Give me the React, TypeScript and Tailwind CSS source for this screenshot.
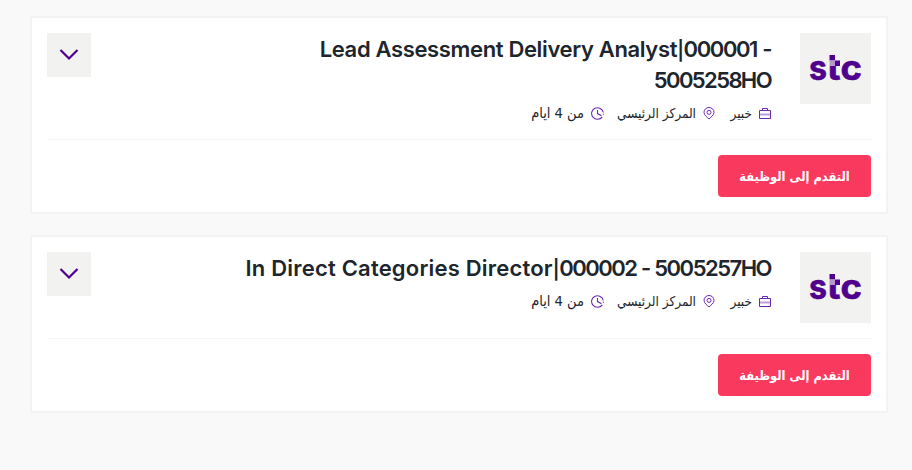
import React from "react";

// ---------- Types ----------
interface Job {
    id: string;
    // each title line is a list of runs with their own tracking
    lines: Array<Array<{ text: string; className: string }>>;
    headerClass: string;
}

// ---------- Data ----------
const JOBS: Job[] = [
    {
        id: "000001",
        lines: [
            [
                { text: "Lead Assessment Delivery Analyst", className: "tracking-[-0.35px]" },
                { text: "|", className: "text-[19px] tracking-[-0.4px]" },
                { text: "000001 -", className: "tracking-[-1.4px] [word-spacing:1px]" },
            ],
            [{ text: "5005258HO", className: "tracking-[-1.6px]" }],
        ],
        headerClass: "h-[107px]",
    },
    {
        id: "000002",
        lines: [
            [
                { text: "In Direct Categories Director", className: "tracking-[0.2px]" },
                { text: "|", className: "text-[19px] tracking-[-0.4px]" },
                { text: "000002 - 5005257HO", className: "tracking-[-1.5px] [word-spacing:0.5px]" },
            ],
        ],
        headerClass: "h-[87px]",
    },
];

// ---------- Icons ----------
function StcLogo() {
    return (
        <svg width="71" height="71" viewBox="0 0 71 71" direction="ltr" aria-label="stc">
            <g fill="#4f008c" stroke="#4f008c" strokeWidth="0.6" fontFamily="Inter" fontWeight="700" fontSize="35">
                <text x="9" y="47.2" textLength="18" lengthAdjust="spacingAndGlyphs">s</text>
                <text x="27" y="47.2" textLength="13.5" lengthAdjust="spacingAndGlyphs">t</text>
                <text x="40.5" y="47.2" textLength="21.5" lengthAdjust="spacingAndGlyphs">c</text>
            </g>
            <path d="M26.500 19h14.500v14H26.500z" fill="#f2f2f1" />
            <path d="M29.5 22h5.5v5.5h-5.5zM35 27.5h5V33h-5z" fill="#4f008c" />
            <path d="M29.5 27.5H35V33h-5.5z" fill="#b897ce" />
        </svg>
    );
}

function BriefcaseIcon() {
    return (
        <svg width="12" height="13" viewBox="0 0 12 13" fill="none" stroke="#6d28b0">
            <path d="M.5 3.500h11v8H.5zM3.500 3.500v-2h5v2" />
            <path d="M1 7.500h10" strokeWidth="2" strokeOpacity=".45" />
        </svg>
    );
}

function PinIcon() {
    return (
        <svg width="12" height="13" viewBox="0 0 12 13" fill="none" stroke="#6d28b0">
            <path d="M6 12C4.3 10.4 1 8.2 1 5.3a5 4.8 0 0 1 10 0C11 8.2 7.700 10.400 6 12z" />
            <circle cx="6" cy="5.400" r="2" />
        </svg>
    );
}

function ClockIcon() {
    return (
        <svg width="13" height="13" viewBox="0 0 13 13" fill="none" stroke="#6d28b0" strokeWidth="1.1">
            <path d="M12.300 5.500A5.900 5.700 0 1 0 11.300 9.800M6.500 3v3.600l4 2.200M12.400 6.800v1" />
        </svg>
    );
}

// ---------- Components ----------
function JobMeta() {
    return (
        <div className="mr-px flex h-5 items-center font-['DejaVu_Sans_Condensed','DejaVu_Sans',sans-serif] text-[13.5px] whitespace-nowrap text-[#1d252d]">
            <BriefcaseIcon />
            <span className="mr-[7px] w-[23px] pt-px">خبير</span>
            <span className="mr-[14px]"><PinIcon /></span>
            <span className="mr-[7px] w-[80px] pt-px">المركز الرئيسي</span>
            <span className="mr-[12px]"><ClockIcon /></span>
            <span className="mr-[7px] w-[54px] pt-px text-[14.5px]">من 4 ايام</span>
        </div>
    );
}

function JobCard({ job }: { job: Job }) {
    return (
        <article className="border-2 border-[#f3f3f3] bg-white p-[15px]">
            <div className={`flex items-start border-b border-[#f4f4f4] ${job.headerClass}`}>
                <div className="size-[71px] shrink-0 bg-[#f2f2f1]">
                    <StcLogo />
                </div>
                <div className="mr-7 flex-1 pt-px">
                    <h2
                        dir="ltr"
                        className="pr-[1px] text-right font-['Inter',sans-serif] text-[22px] leading-[31px] font-[560] whitespace-nowrap text-[#1d252d]"
                    >
                        {job.lines.map((line, i) => (
                            <span key={i} className="block h-[31px]">
                                {line.map((run) => (
                                    <span key={run.text} className={run.className}>{run.text}</span>
                                ))}
                            </span>
                        ))}
                    </h2>
                    <div className="mt-[7px]">
                        <JobMeta />
                    </div>
                </div>
                <button type="button" aria-label="تفاصيل" className="flex size-11 shrink-0 items-center justify-center bg-[#f2f2f1]">
                    <svg width="20" height="14" viewBox="0 0 20 14" fill="none" stroke="#4f008c" strokeWidth="2.2">
                        <path d="M1.500 2 10 10.500 18.500 2" />
                    </svg>
                </button>
            </div>
            <button
                type="button"
                className="mt-[15px] flex h-[42px] w-[153px] items-center justify-center rounded-[4px] bg-[#fa395f] pt-px font-['DejaVu_Sans_Condensed','DejaVu_Sans',sans-serif] text-[12.8px] font-bold whitespace-nowrap text-white"
            >
                التقدم إلى الوظيفة
            </button>
        </article>
    );
}

export default function App() {
    return (
        <main dir="rtl" className="flex h-[470px] flex-col gap-[21px] bg-[#f9f9f9] pt-4 pr-[24px] pl-[30px]">
            {JOBS.map((job) => (
                <JobCard key={job.id} job={job} />
            ))}
        </main>
    );
}
